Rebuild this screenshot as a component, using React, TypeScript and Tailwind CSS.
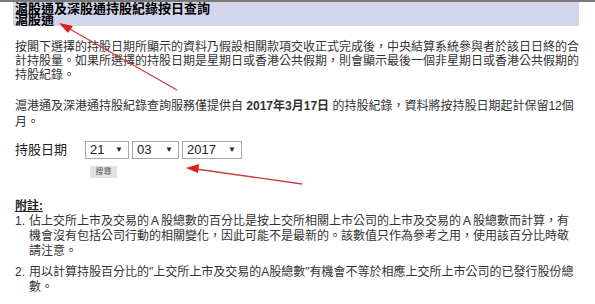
import React from "react";

const FONT = {
  fontFamily: '"Liberation Sans", "Noto Sans CJK TC", sans-serif',
};

function FakeSelect({ value, width }: { value: string; width: string }) {
  return (
    <div
      className={`flex h-[18px] items-center justify-between border border-[#a9a9a9] bg-white pl-[4px] pr-[5px] text-[13px] leading-none text-[#222] ${width}`}
    >
      <span>{value}</span>
      <span className="text-[8px]">▼</span>
    </div>
  );
}

function Arrows() {
  return (
    <svg
      className="pointer-events-none absolute left-0 top-0"
      width="595"
      height="304"
      viewBox="0 0 595 304"
    >
      <line x1="177" y1="90" x2="68" y2="28" stroke="#c9403e" strokeWidth="1.3" />
      <polygon points="59,23 73,26 68,33" fill="#e0201c" />
      <line x1="302" y1="184" x2="196" y2="169" stroke="#c9403e" strokeWidth="1.3" />
      <polygon points="186,168 199,164 198,173" fill="#e0201c" />
    </svg>
  );
}

export default function App() {
  return (
    <div className="relative h-[304px] w-[595px] overflow-hidden bg-white" style={FONT}>
      <div className="h-[2px] bg-[#7b7b7b]" />

      <div className="ml-[13px] w-[566px] bg-[#d3d5ea] px-[2px] py-[1px] text-[13px] font-bold leading-[11px] text-black">
        <div>滬股通及深股通持股紀錄按日查詢</div>
        <div>滬股通</div>
      </div>

      <div className="ml-[15px] w-[566px] text-[12px] text-[#333]">
        <p className="mt-[14px] leading-[14px]">
          按閣下選擇的持股日期所顯示的資料乃假設相關款項交收正式完成後，中央結算系統參與者於該日日終的合計持股量。如果所選擇的持股日期是星期日或香港公共假期，則會顯示最後一個非星期日或香港公共假期的持股紀錄。
        </p>

        <p className="mt-[16px] leading-[16px]">
          滬港通及深港通持股紀錄查詢服務僅提供自 <b>2017年3月17日</b>{" "}
          的持股紀錄，資料將按持股日期起計保留12個月。
        </p>

        <div className="mt-[10px] flex items-center">
          <span className="w-[70px] text-[13px] text-[#222]">持股日期</span>
          <div className="flex gap-[3px]">
            <FakeSelect value="21" width="w-[44px]" />
            <FakeSelect value="03" width="w-[47px]" />
            <FakeSelect value="2017" width="w-[60px]" />
          </div>
        </div>

        <div className="ml-[75px] mt-[6px] flex">
          <button
            type="button"
            className="h-[12px] w-[27px] bg-[#e2e2e2] text-[8px] leading-[12px] text-[#555]"
          >
            搜尋
          </button>
        </div>

        <div className="mt-[21px] font-bold leading-[14px] text-[#222] underline">附註:</div>

        <ol className="mt-[1px] leading-[15px]">
          <li className="flex">
            <span className="w-[14px] shrink-0">1.</span>
            <span>
              佔上交所上市及交易的Ａ股總數的百分比是按上交所相關上市公司的上市及交易的Ａ股總數而計算，有
              <br />
              機會沒有包括公司行動的相關變化，因此可能不是最新的。該數值只作為參考之用，使用該百分比時敬
              <br />
              請注意。
            </span>
          </li>
          <li className="mt-[6px] flex">
            <span className="w-[14px] shrink-0">2.</span>
            <span>
              用以計算持股百分比的"上交所上市及交易的A股總數"有機會不等於相應上交所上市公司的已發行股份總
              <br />
              數。
            </span>
          </li>
        </ol>
      </div>

      <Arrows />
    </div>
  );
}
